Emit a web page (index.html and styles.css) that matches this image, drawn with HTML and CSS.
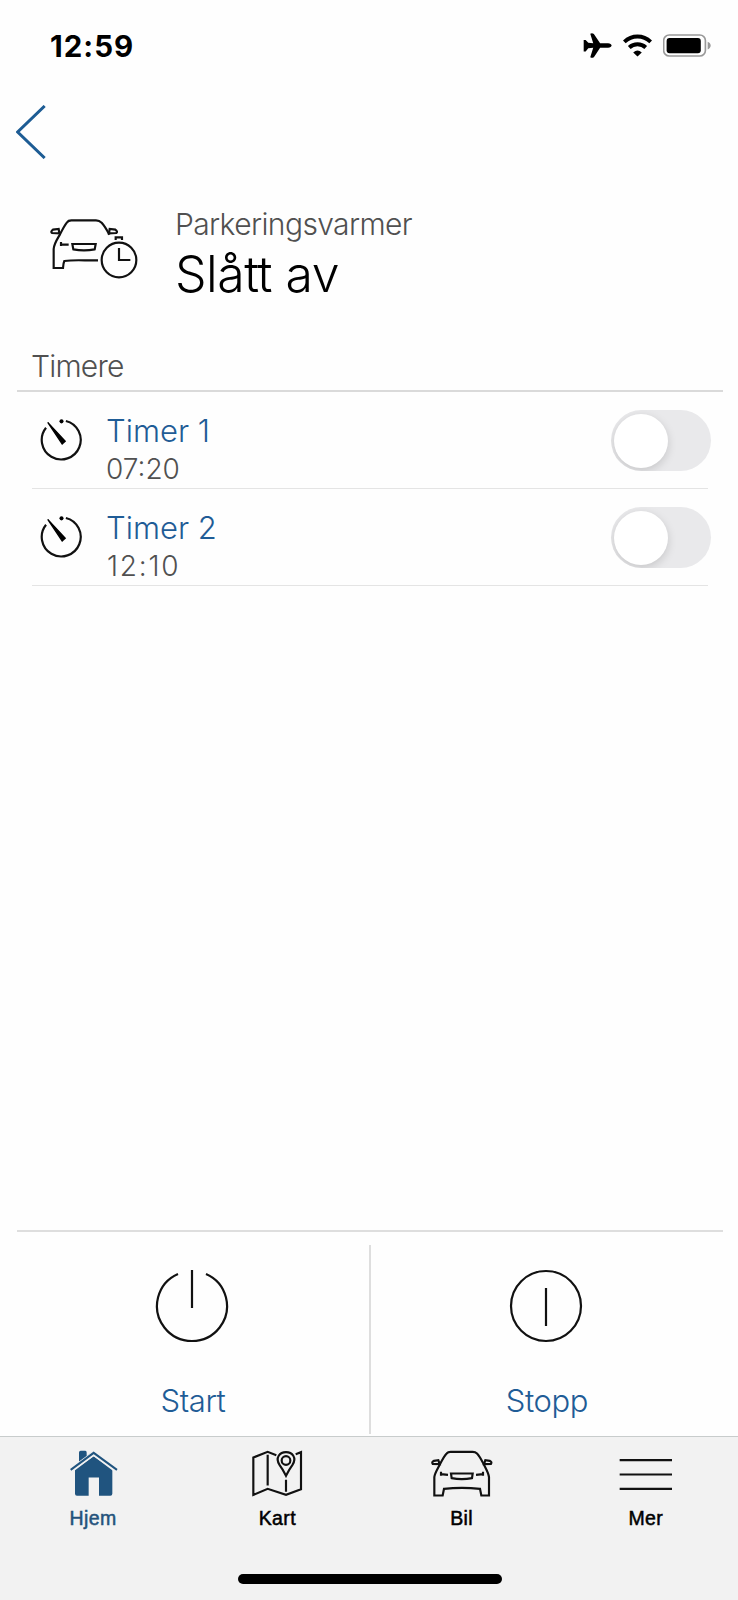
FILE: index.html
```html
<!DOCTYPE html>
<html lang="no">
<head>
  <meta charset="UTF-8" />
  <meta name="viewport" content="width=device-width, initial-scale=1.0" />
  <title>Parkeringsvarmer</title>
  <link rel="stylesheet" href="styles.css">
</head>
<body>
  <div class="screen">

    <div class="status-bar">
      <span class="clock">12:59</span>
      <div class="status-icons">
        <svg class="plane" viewBox="69 69 86 76">
          <path d="M155 107 Q154 113 144 113.500 L120 113.500 L102 141 Q99 145 93 144.500 L90 143 L99 114 L84 115 L76 125 H70 V90 H76 L84 99 L99 100 L90 71 Q96 68 101 72 L120 100 H144 Q154 101 155 107 Z" />
        </svg>
        <svg class="wifi" viewBox="187 70 88 68">
          <path d="M191 93 C214 71 248 71 271 93 M206 110 C220 97 242 97 256 110" fill="none" stroke="#000" stroke-width="12" />
          <path d="M231 137 L218 125 Q231 114 244 125 Z" />
        </svg>
        <svg class="battery" viewBox="308 71 146 69">
          <rect x="310" y="73.500" width="127" height="64" rx="17" fill="none" stroke="#999" stroke-width="5" />
          <rect x="319" y="83" width="104" height="46" rx="9" />
          <path d="M444 94 C456 98 456 113 444 118 Z" fill="#999" />
        </svg>
      </div>
    </div>

    <div class="nav">
      <svg class="back" viewBox="48 316 90 162">
        <path d="M134 319 L53 397 L134 475" />
      </svg>
    </div>

    <div class="hero">
      <svg class="hero-icon line-icon" viewBox="60 55 264 183">
        <path d="M204 182 H165 Q125 181 103 184 Q100 190 99 205 H71 V148 C72 132 80 121 90 104 Q103 78 111 68 Q115 62 124 62 H198 Q208 62 215 69 Q226 81 238 105" />
        <path d="M88 101 L86 88 L69 90 Q61 96 66 100 Z M237 101 L239 88 L256 90 Q264 96 259 100 Z" />
        <path d="M127 133 H197 L194 149 Q162 155 130 149 Z" />
        <path d="M93 127 V139 M93 135 H116" />
        <circle cx="267" cy="181" r="52" />
        <path d="M267 145 V181 H301 M257 121 V113 H276 V121" />
      </svg>
      <div class="hero-text">
        <div class="hero-label">Parkeringsvarmer</div>
        <div class="hero-state">Slått av</div>
      </div>
    </div>

    <div class="section-title">Timere</div>
    <div class="timers">
      <div class="timer">
        <svg class="timer-icon" viewBox="120 237 128 128">
          <path d="M138 266 A58 58 0 1 0 197 246" />
          <circle cx="184" cy="247" r="6" />
          <path class="hand" d="M143 250 L195 306 L186 314 Z" />
        </svg>
        <div class="timer-text">
          <div class="timer-name">Timer 1</div>
          <div class="timer-time">07:20</div>
        </div>
        <div class="toggle"><div class="knob"></div></div>
      </div>
      <div class="timer">
        <svg class="timer-icon" viewBox="120 237 128 128">
          <path d="M138 266 A58 58 0 1 0 197 246" />
          <circle cx="184" cy="247" r="6" />
          <path class="hand" d="M143 250 L195 306 L186 314 Z" />
        </svg>
        <div class="timer-text">
          <div class="timer-name">Timer 2</div>
          <div class="timer-time spaced">12:10</div>
        </div>
        <div class="toggle"><div class="knob"></div></div>
      </div>
    </div>

    <div class="actions">
      <div class="action">
        <svg class="action-icon" viewBox="0 0 76 76">
          <path d="M24 5.900 A35 35 0 1 0 52 5.900 M38 2 V40" />
        </svg>
        <span>Start</span>
      </div>
      <div class="divider"></div>
      <div class="action">
        <svg class="action-icon" viewBox="0 0 76 76">
          <circle cx="38" cy="38" r="35" />
          <path d="M38 20 V58" />
        </svg>
        <span>Stopp</span>
      </div>
    </div>

    <div class="tab-bar">
      <div class="tabs">
        <div class="tab active">
          <svg class="tab-icon" viewBox="183 76 192 140">
            <path d="M237 110 V83 Q237 78 242 78 H256 Q260 78 260 83 V93 L281 78" />
            <path d="M225 133 L281 94 L337 133 V207 Q337 213 331 213 H297 V158 H266 V213 H231 Q225 213 225 207 Z" />
            <path class="gap" d="M214 140 L281 90 L348 140" />
            <path class="roof" d="M212 135 L281 84 L351 135" />
          </svg>
          <span>Hjem</span>
        </div>
        <div class="tab">
          <svg class="tab-icon line-icon" viewBox="737 76 192 140">
            <path d="M831 91 L805 81 L762 98 V210 L805 192 L860 210 L905 193 V82 L889 88 M805 90 V182 M860 165 V201" />
            <path d="M860 153 Q850 133 841 121 C826 98 842 82 860 82 C878 82 894 98 879 121 Q870 133 860 153 Z" />
            <circle cx="860" cy="107" r="13" />
          </svg>
          <span>Kart</span>
        </div>
        <div class="tab">
          <svg class="tab-icon line-icon" viewBox="184 76 192 140">
            <path d="M197 212 V157 C198 145 207 132 215 116 Q227 93 234 86 Q238 81 246 81 H312 Q320 81 325 86 Q332 93 344 116 C352 132 360 145 361 157 V212 H338 L334 192 Q279 186 226 192 L222 212 Z" />
            <path d="M213 118 L209 106 L196 108 Q188 112 192 117 Z M346 118 L350 106 L363 108 Q371 112 367 117 Z" />
            <path d="M247 146 H312 L310 160 Q279 166 249 160 Z" />
            <path d="M217 141 V153 M217 148 L238 150 M343 141 V153 M343 148 L322 150" />
          </svg>
          <span>Bil</span>
        </div>
        <div class="tab">
          <svg class="tab-icon line-icon" viewBox="738 76 192 140">
            <path d="M755 106 H912 M755 149 H912 M755 192 H912" />
          </svg>
          <span>Mer</span>
        </div>
      </div>
      <div class="home-indicator"></div>
    </div>

  </div>
</body>
</html>
```

FILE: styles.css
```css
* {
  box-sizing: border-box;
}
body {
  margin: 0;
  background: #fefefe;
  font-family: Inter, "Liberation Sans", sans-serif;
  font-weight: 300;
  color: #000;
}
svg {
  display: block;
  flex: none;
}
.screen {
  display: flex;
  flex-direction: column;
  height: 1600px;
}
.status-bar {
  display: flex;
  align-items: center;
  justify-content: space-between;
  height: 91px;
  padding: 0 27px 0 50px;
}
.clock {
  font-size: 29.5px;
  font-weight: 750;
  letter-spacing: 1px;
}
.status-icons {
  display: flex;
  align-items: center;
}
.plane {
  width: 29px;
  height: 25px;
  margin-right: 11px;
}
.wifi {
  width: 29px;
  height: 23px;
  margin-right: 11px;
}
.battery {
  width: 48px;
  height: 23px;
}
.nav {
  display: flex;
  align-items: center;
  height: 84px;
  padding-left: 16px;
}
.back {
  width: 30px;
  height: 54px;
  margin-bottom: 2px;
  fill: none;
  stroke: #1d5c94;
  stroke-width: 9;
}
.line-icon {
  fill: none;
  stroke: #111;
  stroke-width: 6.5;
}
.hero {
  display: flex;
  height: 171px;
  padding: 29px 0 0 50px;
}
.hero-icon {
  width: 88px;
  height: 61px;
  margin-top: 14px;
}
.hero-text {
  margin-left: 37px;
}
.hero-label {
  font-size: 30px;
  line-height: 41px;
  letter-spacing: -0.6px;
  color: #505050;
}
.hero-state {
  font-size: 50px;
  line-height: 58px;
  letter-spacing: -0.5px;
}
.section-title {
  height: 46px;
  margin: 0 15px 0 17px;
  padding-left: 14px;
  border-bottom: 2px solid #dadada;
  font-size: 30px;
  line-height: 41px;
  letter-spacing: -0.8px;
  color: #505050;
}
.timers {
  margin: 0 30px 0 32px;
}
.timer {
  display: flex;
  height: 97px;
  padding-top: 18px;
  border-bottom: 1px solid #e4e4e4;
}
.timer-icon {
  width: 43px;
  height: 43px;
  margin: 8px 0 0 8px;
  fill: none;
  stroke: #111;
  stroke-width: 6.5;
}
.timer-icon circle,
.timer-icon .hand {
  fill: #000;
  stroke: none;
}
.timer-icon .hand {
  stroke: #000;
  stroke-width: 4;
}
.timer-text {
  flex: 1;
  margin: 2px 0 0 23px;
}
.timer-name {
  font-size: 31px;
  line-height: 38px;
  color: #1f5c96;
}
.timer-time {
  font-size: 28px;
  line-height: 38px;
  color: #505050;
}
.timer-time.spaced {
  padding-left: 1px;
  letter-spacing: 1.8px;
}
.toggle {
  width: 100px;
  height: 61px;
  margin-right: -3px;
  padding: 4px 3px;
  border-radius: 31px;
  background: #e9e9eb;
  overflow: hidden;
}
.knob {
  width: 54px;
  height: 54px;
  border-radius: 50%;
  background: #fff;
  box-shadow: 0 3px 10px rgba(0, 0, 0, 0.15);
}
.actions {
  display: flex;
  height: 206px;
  margin: auto 15px 0 17px;
  border-top: 2px solid #dedede;
}
.action {
  flex: 1;
  display: flex;
  flex-direction: column;
  align-items: center;
  padding-top: 36px;
  font-size: 31px;
  line-height: 38px;
  letter-spacing: -0.4px;
  color: #1f5c96;
}
.action-icon {
  width: 76px;
  height: 76px;
  margin: 0 2px 38px 0;
  fill: none;
  stroke: #111;
  stroke-width: 2.2;
}
.divider {
  width: 2px;
  height: 189px;
  margin-top: 13px;
  background: #dedede;
}
.tab-bar {
  height: 164px;
  border-top: 1px solid #c8cccc;
  background: #f2f2f2;
}
.tabs {
  display: grid;
  grid-template-columns: repeat(4, 1fr);
  height: 137px;
  padding-left: 1px;
}
.tab {
  display: flex;
  flex-direction: column;
  align-items: center;
  padding-top: 13px;
  font-family: "Liberation Sans", sans-serif;
  font-size: 19.5px;
  font-weight: 400;
  line-height: 24px;
  letter-spacing: 0.4px;
  -webkit-text-stroke: 0.5px currentColor;
}
.tab-icon {
  width: 64px;
  height: 47px;
  margin-bottom: 9px;
}
.tab.active {
  color: #24527c;
}
.tab.active .tab-icon {
  fill: #20547f;
}
.tab-icon .gap {
  fill: none;
  stroke: #f2f2f2;
  stroke-width: 7;
}
.tab-icon .roof {
  fill: none;
  stroke: #20547f;
  stroke-width: 6;
}
.home-indicator {
  width: 264px;
  height: 10px;
  margin: 0 auto 0 238px;
  border-radius: 5px;
  background: #000;
}
```
